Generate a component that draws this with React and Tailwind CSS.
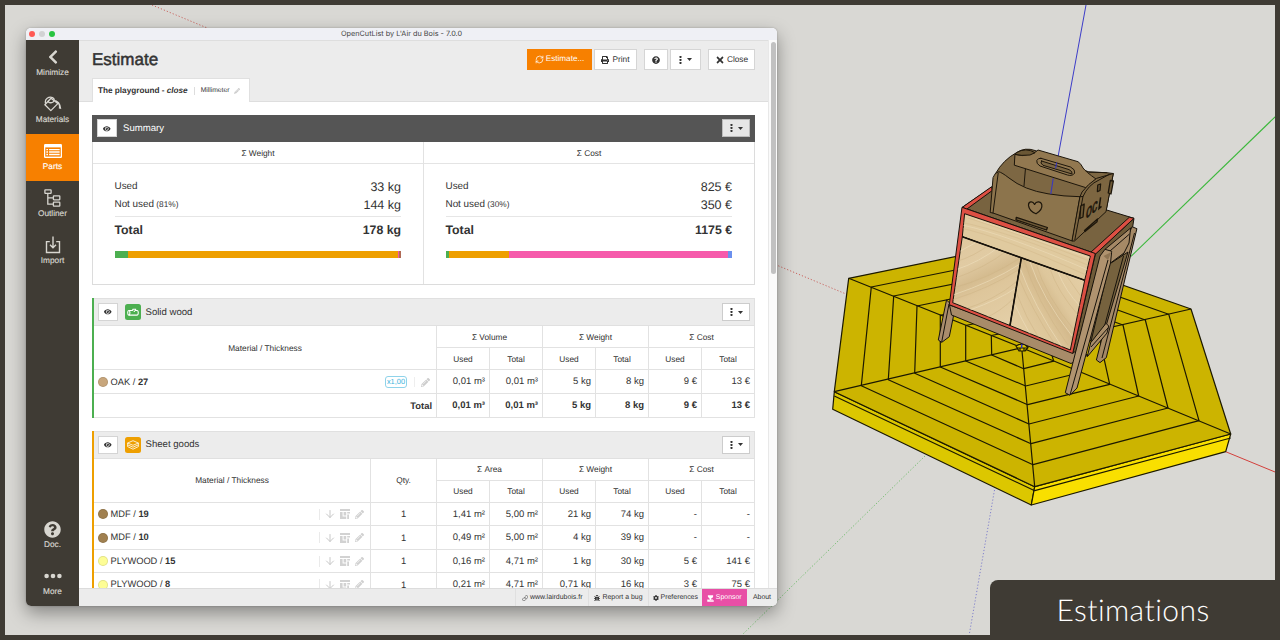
import React from "react";
import {
  FaChevronLeft, FaEye, FaPrint, FaQuestionCircle, FaTimes,
  FaPencilAlt, FaBug, FaCog,
} from "react-icons/fa";
import { LuArrowDown, LuRefreshCw, LuLink } from "react-icons/lu";

/* ---------- small icons ---------- */
const Bucket = () => (
  <svg width="18" height="16" viewBox="0 0 18 16" fill="none" stroke="currentColor" strokeWidth="1.3">
    <path d="M7 2.2 L13.8 7.6 L6.8 14.6 L0.9 8.8 Z" strokeLinejoin="round" />
    <path d="M1.6 7.6 C0.2 2.8 5 0.2 8.6 1.6 C11.2 2.8 10.4 6 7.8 6.6 C5 7.2 3.6 5.6 4.6 4.6" />
    <path d="M9.5 3.8 Q16.6 4.4 17.3 13 L14.8 12.4 Q15.4 8.6 13.4 7.2 Z" fill="currentColor" stroke="none" />
  </svg>
);
const Parts = () => (
  <svg width="18" height="14" viewBox="0 0 17 14" preserveAspectRatio="none">
    <rect width="17" height="14" rx="1.2" fill="#fff" />
    <rect x="1.2" y="3.4" width="14.6" height="9.2" fill="#f78000" />
    <g fill="#fff">
      <path d="M2.2 4.9h1.6v1.4h-1.6zM4.8 4.9h10v1.4h-10zM2.2 7.3h1.6v1.4h-1.6zM4.8 7.3h10v1.4h-10zM2.2 9.8h1.6v1.4h-1.6zM4.8 9.8h10v1.4h-10z" />
    </g>
  </svg>
);
const Outliner = () => (
  <svg width="17" height="18" viewBox="0 0 17 18" fill="none" stroke="currentColor" strokeWidth="1.3">
    <rect x="0.9" y="0.8" width="6.2" height="3.6" rx=".5" />
    <rect x="9.4" y="6.8" width="6.4" height="4" rx=".5" />
    <rect x="9.4" y="13.2" width="6.4" height="4" rx=".5" />
    <path d="M3.8 4.5V15.2H9.4M3.8 8.8H9.4" />
  </svg>
);
const Import = () => (
  <svg width="16" height="18" viewBox="0 0 16 18" fill="none" stroke="currentColor" strokeWidth="1.4">
    <path d="M4.8 5.6H1.5V16.5H14.5V5.6H11.2" />
    <path d="M8 0.6V11.6M5 8.8L8 11.8L11 8.8" />
  </svg>
);
const Dots = () => (
  <svg width="18" height="6" viewBox="0 0 18 6" fill="currentColor">
    <circle cx="2.6" cy="3" r="2.3" /><circle cx="9" cy="3" r="2.3" /><circle cx="15.4" cy="3" r="2.3" />
  </svg>
);
const VDots = () => (
  <svg width="3" height="8" viewBox="0 0 3 8" fill="#333">
    <rect x=".5" y="0" width="2" height="2" rx=".4" /><rect x=".5" y="3" width="2" height="2" rx=".4" /><rect x=".5" y="6" width="2" height="2" rx=".4" />
  </svg>
);
const Caret = () => (
  <svg width="5" height="3" viewBox="0 0 5 3" fill="#333"><path d="M0 0H5L2.5 3Z" /></svg>
);
const Log = () => (
  <svg width="12" height="8" viewBox="0 0 12 8" fill="none" stroke="#fff" strokeWidth="1.1">
    <ellipse cx="1.8" cy="4.8" rx="1.1" ry="2.3" />
    <path d="M1.8 2.5H5.4L6 1.2H8.6V2.5H10.2Q11.3 2.7 11.3 4.8T10.2 7.1H1.8M7.3 2.5V4" />
  </svg>
);
const Sheets = () => (
  <svg width="12" height="10" viewBox="0 0 12 10" fill="none" stroke="#fff" strokeWidth=".8" strokeLinejoin="round">
    <path d="M.6 3L6 .7L11.4 3L6 5.3ZM.6 3V4.8L6 7.2L11.4 4.8V3M.6 4.9V6.6L6 9.2L11.4 6.6V4.9" />
  </svg>
);
const CutPlan = () => (
  <svg width="10" height="10" viewBox="0 0 10 10" fill="#d2d2d2">
    <path d="M0 0H10V2H0ZM0 3H2.6V7.6H6.2V10H0ZM3.6 3H6.2V6.6H3.6ZM7.2 3H10V4.6H7.2ZM7.2 5.4H9V10H7.2Z" />
  </svg>
);
const Sponsor = () => (
  <svg width="7" height="7" viewBox="0 0 8 8" fill="#fff">
    <path d="M1 .3H7V1.8Q6.8 3.4 5 3.8L4.6 5H6.8V5.8L4 5.6L2.2 4.8L3 3.8Q1.2 3.2 1 1.8ZM.3 5H1.6L3.2 6H7.7V7.6H.3Z" />
  </svg>
);

/* ---------- sidebar ---------- */
const NavItem = ({ icon, label, active }) => (
  <div className={active ? "flex h-[47px] flex-col items-center bg-[#f78000] text-white" : "flex h-[47px] flex-col items-center text-[#d8d6d0]"}>
    <div className="mt-[7px] flex h-[20px] items-center">{icon}</div>
    <div className="mt-px text-[8.25px] leading-[10px] [-webkit-text-stroke:0.15px_currentColor]">{label}</div>
  </div>
);

/* ---------- buttons ---------- */
const Btn = ({ className = "", children }) => (
  <div className={"flex shrink-0 items-center justify-center border border-[#d5d5d5] bg-white text-[8.3px] text-[#333] " + className}>{children}</div>
);
const MenuBtn = ({ className = "bg-white border-[#ccc]" }) => (
  <div className={"flex h-[18px] w-[28px] items-center justify-center gap-[5px] border " + className}>
    <VDots /><Caret />
  </div>
);
const EyeBtn = ({ className = "" }) => (
  <div className={"flex h-[18px] w-[20px] items-center justify-center border border-[#d4d4d4] bg-white " + className}>
    <FaEye size={7.5} color="#333" />
  </div>
);

/* ---------- summary ---------- */
const Line = ({ label, note, value }) => (
  <div className="flex h-[18px] items-center justify-between">
    <span className="pt-[1.5px] text-[9.9px]">{label}{note && <span className="text-[8.3px]"> {note}</span>}</span>
    <span className="text-[12.5px]">{value}</span>
  </div>
);
const SummaryCol = ({ title, used, note, unused, total, bar, className }) => (
  <div className={"flex flex-col " + className}>
    <div className="flex h-[22px] items-center justify-center border-b border-[#e4e4e4] pt-[2px] text-[8.3px]">{title}</div>
    <div className="flex flex-col pl-[21.5px] pr-[22px] pt-[14px]">
      <Line label="Used" value={used} />
      <Line label="Not used" note={note} value={unused} />
      <div className="mt-[2px] h-px bg-[#e6e6e6]" />
      <div className="mt-[4px] flex h-[18px] items-center justify-between text-[12.3px] font-bold">
        <span>Total</span><span>{total}</span>
      </div>
      <div className="mt-[12px] flex h-[6.5px]">{bar}</div>
    </div>
  </div>
);

/* ---------- tables ---------- */
const cell = "flex items-center border-b border-r border-[#e2e2e2] pt-px";
const rowCell = "flex items-center border-b border-r border-[#e2e2e2] pt-[2px]";
const HeadCols = ({ first }) => (
  <div className="grid grid-cols-6 text-[8.3px]">
    {[first, "Σ Weight", "Σ Cost"].map((t) => (
      <div key={t} className={cell + " col-span-2 h-[22px] justify-center"}>{t}</div>
    ))}
    {["Used", "Total", "Used", "Total", "Used", "Total"].map((t, i) => (
      <div key={i} className={cell + " h-[22px] justify-center"}>{t}</div>
    ))}
  </div>
);
const Values = ({ v, className }) => (
  <div className={"grid grid-cols-6 text-[9.5px] " + className}>
    {v.map((t, i) => <div key={i} className={rowCell + " justify-end whitespace-nowrap pr-[4px]"}>{t}</div>)}
  </div>
);
const GroupHead = ({ icon, name }) => (
  <div className="flex h-[28px] items-center border-y border-r border-[#e0e0e0] bg-[#ececec] pl-[4px] pr-[4px]">
    <EyeBtn />
    <div className="ml-[7px] flex h-[16px] w-[16px] items-center justify-center rounded-[2.5px]">{icon}</div>
    <div className="ml-[4.5px] flex-1 pt-[2px] text-[9.6px]">{name}</div>
    <MenuBtn />
  </div>
);
const Name = ({ dot, name, t }) => (
  <>
    <span className={"mr-[2.5px] h-[10px] w-[10px] rounded-full border border-black/10 " + dot} />
    <span className="flex-1 pt-px text-[9.3px]">{name} / <b>{t}</b></span>
  </>
);
const sheetRows = [
  { dot: "bg-[#a08050]", name: "MDF", t: 19, v: ["1,41 m²", "5,00 m²", "21 kg", "74 kg", "-", "-"] },
  { dot: "bg-[#a08050]", name: "MDF", t: 10, v: ["0,49 m²", "5,00 m²", "4 kg", "39 kg", "-", "-"] },
  { dot: "bg-[#fdfd96]", name: "PLYWOOD", t: 15, v: ["0,16 m²", "4,71 m²", "1 kg", "30 kg", "5 €", "141 €"] },
  { dot: "bg-[#fdfd96]", name: "PLYWOOD", t: 8, v: ["0,21 m²", "4,71 m²", "0,71 kg", "16 kg", "3 €", "75 €"] },
];

/* ---------- 3D scene ---------- */
const O = [1021.7, 347.7];
const B = [1009.7, 245.5];
const lerpB = (t) => [O[0] + (B[0] - O[0]) * t, O[1] + (B[1] - O[1]) * t];
const spA = [[848.7, 278.3], [871.3, 287], [893.7, 296], [917, 306], [940.3, 315.3], [965.7, 325.5], [991.3, 335.5]];
const spB = [1, 0.87, 0.74, 0.605, 0.47, 0.325, 0.175].map(lerpB);
const spC = [[1191, 309], [1168.7, 314.2], [1145.3, 320], [1123, 325], [1098, 331], [1073, 337], [1048, 342]];
const spD = [[1230.7, 434], [1199, 420.7], [1168, 408], [1138.7, 396], [1109.7, 384.3], [1081, 372.5], [1053.7, 361.2]];
const spE = [[1034.7, 486.7], [1033, 464.7], [1031, 443.7], [1029, 424], [1027.7, 404.7], [1025.7, 386], [1023.7, 368.7]];
const spF = [[834.3, 391.7], [861.3, 385.7], [888.3, 379.7], [914.7, 373.3], [940.3, 367], [965.7, 361], [991.7, 355]];
const spokes = [spA, spB, spC, spD, spE, spF];
const pts = (a) => a.map((p) => p.join(",")).join(" ");

const Scene = () => (
  <svg className="absolute inset-0" width="1280" height="640" viewBox="0 0 1280 640">
    <defs>
      <linearGradient id="wl" gradientUnits="userSpaceOnUse" x1="965" y1="240" x2="1003" y2="322">
        <stop offset="0" stopColor="#dfc89f" /><stop offset=".25" stopColor="#e1cba3" /><stop offset=".45" stopColor="#d5bc90" /><stop offset=".6" stopColor="#dec69b" /><stop offset="1" stopColor="#e3cea6" />
      </linearGradient>
      <linearGradient id="wr" gradientUnits="userSpaceOnUse" x1="1015" y1="320" x2="1080" y2="280">
        <stop offset="0" stopColor="#e2cca2" /><stop offset=".35" stopColor="#dcc498" /><stop offset=".5" stopColor="#d4ba8d" /><stop offset=".65" stopColor="#dec79c" /><stop offset="1" stopColor="#e3cda4" />
      </linearGradient>
      <clipPath id="dl"><polygon points="962.3,236.7 1021.3,258 1010,325.5 952.7,302.7" /></clipPath>
      <clipPath id="dr"><polygon points="1021.3,258 1084.7,280.3 1070.3,350 1010,325.5" /></clipPath>
      <clipPath id="dt"><polygon points="964.6,213.7 1090.3,256 1084.7,280.3 962.3,236.7" /></clipPath>
    </defs>
    {/* axes */}
    <g fill="none" strokeWidth="1">
      <path d="M152 5L846 294" stroke="#c96560" strokeDasharray="1.2 2" />
      <path d="M1225.7 451.7L1276 472.4" stroke="#d3403c" />
      <path d="M1276 116L1131 256.3" stroke="#3cb83c" strokeWidth="1.1" />
      <path d="M925 456L741 636" stroke="#6fbc6b" strokeDasharray="1.2 2" />
      <path d="M994.5 490L969 636" stroke="#8080cc" strokeDasharray="1.2 2" />
      <path d="M1086 5L1058 157" stroke="#3c3cc8" />
    </g>
    {/* platform */}
    <g stroke="#1b1800" strokeWidth="1.2" strokeLinejoin="round">
      <polygon points="834.3,391.7 1034.7,486.7 1031.3,505 832.7,409.3" fill="#dcc700" />
      <polygon points="1034.7,486.7 1230.7,434 1225.7,451.7 1031.3,505" fill="#f9df00" />
      {spA.map((_, i) => <polygon key={i} points={pts(spokes.map((s) => s[i]))} fill="#ccb400" />)}
      <path fill="none" d="M834.3 396L1034.7 490.7L1230.7 438" />
      <path fill="none" d={spokes.map((s) => `M${O[0]} ${O[1]}L${s[0][0]} ${s[0][1]}`).join("")} />
      <polygon points="1016,346 1019,344.5 1025,344.5 1028,347.5 1025,351 1019,351" fill="#d8c000" />
      <path d="M1017 348H1027M1020 348V351M1024 348V351" fill="none" />
    </g>
    <path d="M1022.3 342L1021.5 348" stroke="#2a2ad0" strokeWidth="1.4" />
    {/* cabinet */}
    <g stroke="#17120b" strokeWidth="1" strokeLinejoin="round">
      <polygon points="946.5,300 938.3,340 941.7,342.4 949.3,336.7 953.3,317 953,306" fill="#a98c6c" />
      <path d="M949 304L941.7 342" fill="none" />
      <polygon points="949.5,305 951.5,315 1071,363.5 1088,355 1074,350" fill="#a88b69" />
      <polygon points="1095.5,253.7 1134,218.3 1132.7,226.7 1105,330 1072.7,353.3" fill="#6f5b38" />
      <polygon points="1132,226.7 1136.9,228.7 1106.3,357.7 1100,362.6 1096.4,360 1128,236" fill="#a58966" />
      <path d="M1134.5 233L1102 358" fill="none" />
      <polygon points="1128,252 1109.5,264 1090.7,342.7 1106,326" fill="#76623e" />
      <path d="M1123.5 256L1104 328" fill="none" />
      <polygon points="1105,249.3 1130.6,228 1129,243 1124,253 1110.5,263" fill="#a58966" />
      <path d="M1110 251L1129.5 234" fill="none" />
      <polygon points="1090.7,342.7 1106,323.3 1108.7,326 1107,333 1087.3,356.7" fill="#a98d69" />
      <path d="M1091 347L1108 328" fill="none" />
      <polygon points="1100,256 1105,249.3 1111.7,251.3 1110.5,263 1077,388 1070,395.3 1065.3,392.7" fill="#b0936f" />
      <path d="M1108 260L1070 395" fill="none" />
      <polygon points="1103.5,256 1108,260 1111.5,252" fill="#8e7452" stroke="none" />
      <polygon points="962.3,207.3 992,187 1106.7,210 1134,218.3 1095.3,253.5" fill="#786340" />
      <polygon points="962.3,207.3 991.7,186.7 992.3,190.5 966.7,209.2" fill="#dd4f43" />
      <polygon points="1090.7,252.3 1129.3,217.3 1134,218.3 1095.6,254" fill="#dd4f43" />
      <polygon points="962,207.3 1095.3,253.5 1072.7,353.5 949.3,304.7" fill="#dd4f43" />
      <polygon points="964.6,213.7 1090.3,256 1084.7,280.3 962.3,236.7" fill="#e0ca9f" />
      <polygon points="962.3,236.7 1021.3,258 1010,325.5 952.7,302.7" fill="url(#wl)" />
      <polygon points="1021.3,258 1084.7,280.3 1070.3,350 1010,325.5" fill="url(#wr)" />
    </g>
    {/* wood grain */}
    <g fill="none" strokeWidth="1">
      <g clipPath="url(#dt)">
        <path d="M960 222Q1010 232 1090 266M960 228Q1000 236 1086 275M968 218Q1020 234 1092 262" stroke="#d3ba8c" opacity=".5" />
        <path d="M962 225Q1005 234 1088 270M975 219L1090 258" stroke="#ecdcb9" opacity=".6" />
      </g>
      <g clipPath="url(#dl)">
        <path d="M955 262Q975 256 990 244M953 279Q985 268 1008 250M953 288Q990 278 1020 258M952 300Q990 288 1018 270M962 310Q995 300 1016 282M985 318Q1000 312 1014 298" stroke="#cdb283" opacity=".45" />
        <path d="M955 270Q980 262 1000 246M953 295Q992 282 1020 264M970 310Q998 300 1016 288M955 254L975 243" stroke="#eedfbe" opacity=".6" />
      </g>
      <g clipPath="url(#dr)">
        <path d="M1016 292Q1026 318 1040 340M1018 276Q1032 310 1056 346M1024 260Q1036 300 1068 345M1036 264Q1046 296 1074 330M1050 269Q1058 292 1078 315M1066 275L1082 298" stroke="#cdb283" opacity=".45" />
        <path d="M1015 305Q1022 320 1030 334M1020 268Q1034 306 1062 347M1030 262Q1042 298 1072 336M1058 272Q1066 292 1080 306" stroke="#eedfbe" opacity=".6" />
      </g>
    </g>
    <path d="M962.3 236.7L1084.7 280.3M1021.3 258L1010 325.5" stroke="#17120b" strokeWidth="1.6" fill="none" />
    {/* crate */}
    <g stroke="#1d160b" strokeWidth="1" strokeLinejoin="round" strokeLinecap="round">
      <path d="M995.7 173.3Q1003 160 1016.7 152.5Q1025 147 1035 150.5L1089 172L1106.7 172.7L1113.3 173.5L1106 211L1080 220L998 200Z" fill="#7d6743" />
      <path d="M1025.5 168L1024 186" fill="none" />
      <path d="M1015.3 154.5Q1022 157 1030 154Q1035 153.5 1038 150L1078 161.7Q1081 163.5 1083 168Q1086 172 1096 179L1086 187.7L1014.7 165.3Z" fill="#927850" />
      <path d="M1016.7 152.5Q1026 147 1035 152.7L1030 155Q1021 156 1015.5 154.5Z" fill="#6a5735" />
      <path d="M1041 158.3L1070.5 167Q1075.5 169.5 1074.7 173Q1072.5 176.5 1067.5 175L1040 166Q1036 163.5 1036.8 160.5Q1038 157.8 1041 158.3Z" fill="#927850" />
      <path d="M1041.5 161L1069 169.6Q1073 171.5 1072 174L1043 165.3Q1039.5 163 1041.5 161Z" fill="#7d6743" />
      <path d="M995.7 173.3L998.7 171.7Q1002 172.5 1009 178Q1024 190 1048 193.8Q1064 196.5 1080 196.7L1072.3 241L993 213L990.2 212.5L993 178Z" fill="#8c744c" />
      <path d="M998.2 173L993 213" fill="none" />
      <path d="M1080 196.7L1082 192Q1088 184 1096.7 178.3L1113.3 173.5L1106 211.7L1074.5 241L1072.3 241Z" fill="#7d6641" />
      <path d="M1083 196.5L1074.8 240M1080 196.7L1083 196.5Q1088 185 1099 180L1109 174.5M1089 172L1106.7 172.7" fill="none" />
      <path d="M1016.3 217.3L1047.4 227.5L1046.5 230L1016 219.8ZM1084.5 230.5L1097.5 219L1097 221.8L1085 231.5ZM1097.8 185L1100.6 184L1100 190.5L1097.4 191.6ZM1110.3 180.5L1113.4 181L1111 194L1108.2 193ZM1080.8 206L1084.2 204L1083 217L1079.8 218.5Z" fill="#6e5936" strokeWidth="1.3" />
      <path d="M1034.6 204.4C1032.5 200.3 1028.3 201.4 1028.5 205.4C1029 210 1032.6 212.4 1036 213.8C1039.6 211.6 1042.6 208.6 1041.8 204.6C1040.6 201.2 1036.2 201 1034.6 204.4Z" fill="#927850" strokeWidth="1.2" />
    </g>
    <text transform="matrix(.56 -.46 -.12 1 1085.6 219)" fontFamily="Liberation Sans, sans-serif" fontSize="19" fill="#1d160b" stroke="#1d160b" strokeWidth=".8">oc</text>
    <path d="M1100.6 197.4L1099 208.6L1101.5 206.4" stroke="#1d160b" strokeWidth="1.5" fill="none" />
    <path d="M1056.6 162.5L1055.6 168.5M1053.2 178.5L1050.8 194" stroke="#3838c0" strokeWidth="1.1" />
  </svg>
);

export default function App() {
  return (
    <div className="relative h-[640px] w-[1280px] overflow-hidden bg-[#3f3b34] p-[5px] font-['Liberation_Sans',Arial,sans-serif] text-[#333] [text-rendering:geometricPrecision]">
      <div className="h-[630px] w-[1270px] bg-[#d9d8d4]" />
      <div className="absolute inset-0 [clip-path:inset(5px)]"><Scene /></div>

      <div className="absolute left-[26px] top-[28px] flex h-[578px] w-[751px] flex-col overflow-hidden rounded-[5px] bg-white shadow-[0_7px_18px_rgba(0,0,0,0.38),0_0_2px_rgba(0,0,0,0.25)]">
        <div className="relative flex h-[12px] shrink-0 items-center justify-center bg-[#eff0f5] font-['Inter',sans-serif] text-[7.3px] text-[#444]">
          <div className="absolute left-[3px] flex gap-[4px]">
            <span className="h-[6px] w-[6px] rounded-full bg-[#ff5a55]" />
            <span className="h-[6px] w-[6px] rounded-full bg-[#d2d2d4]" />
            <span className="h-[6px] w-[6px] rounded-full bg-[#28c440]" />
          </div>
          OpenCutList by L'Air du Bois - 7.0.0
        </div>

        <div className="flex h-[566px]">
          <nav className="flex w-[53px] shrink-0 flex-col justify-between bg-[#3f3b34]">
            <div>
              <NavItem icon={<FaChevronLeft size={16} />} label="Minimize" />
              <NavItem icon={<Bucket />} label="Materials" />
              <NavItem icon={<Parts />} label="Parts" active />
              <NavItem icon={<Outliner />} label="Outliner" />
              <NavItem icon={<Import />} label="Import" />
            </div>
            <div>
              <NavItem icon={<FaQuestionCircle size={17} />} label="Doc." />
              <NavItem icon={<Dots />} label="More" />
            </div>
          </nav>

          <div className="flex flex-1 flex-col">
            <div className="flex h-[548px]">
              <main className="flex w-[689px] flex-col overflow-hidden">
                <header className="h-[62px] shrink-0 border-b border-t border-[#dedede] bg-[#ececec] pl-[13px] pr-[13px]">
                  <div className="flex h-[37px] items-center">
                    <h1 className="flex-1 text-[17px] leading-none [-webkit-text-stroke:0.5px_#333]">Estimate</h1>
                    <Btn className="h-[21px] w-[65px] gap-[2px] border-[#f78000] bg-[#f78000]! text-white!"><LuRefreshCw size={9} /><span className="text-[8.15px]">Estimate...</span></Btn>
                    <Btn className="ml-[2px] h-[21px] w-[43px] gap-[3px]"><FaPrint size={8} />Print</Btn>
                    <Btn className="ml-[7px] h-[21px] w-[24px]"><FaQuestionCircle size={8} /></Btn>
                    <Btn className="ml-[2px] h-[21px] w-[31px] gap-[5px]"><VDots /><Caret /></Btn>
                    <Btn className="ml-[7px] h-[21px] w-[47px] gap-[2px]"><FaTimes size={10} />Close</Btn>
                  </div>
                  <div className="flex h-[24px] w-[158px] items-center border-x border-t border-[#e0e0e0] bg-white pl-[5px] pt-px shadow-[0_1px_0_#fff]">
                    <b className="whitespace-nowrap text-[8.2px]">The playground - <i>close</i></b>
                    <span className="ml-[6px] h-[8px] w-px bg-[#ddd]" />
                    <span className="ml-[6px] text-[6.75px]">Millimeter</span>
                    <FaPencilAlt size={6} color="#ccc" className="ml-[4px]" />
                  </div>
                </header>

                <div className="flex min-h-0 flex-1 flex-col pl-[13px] pr-[13px] pt-[12.5px]">
                  <section className="h-[170.5px] shrink-0 border border-[#dcdcdc]">
                    <div className="-mx-px -mt-px flex h-[27.5px] items-center bg-[#555] pl-[5px] pr-[5px] text-white">
                      <EyeBtn />
                      <div className="ml-[6px] flex-1 pt-[2px] text-[9.6px]">Summary</div>
                      <MenuBtn className="border-[#bbb] bg-[#e6e6e6]" />
                    </div>
                    <div className="flex h-[142px]">
                      <SummaryCol className="w-[331px] border-r border-[#e2e2e2]" title="Σ Weight" used="33 kg" note="(81%)" unused="144 kg" total="178 kg"
                        bar={<><i className="w-[13px] bg-[#4caf50]" /><i className="flex-1 bg-[#ee9f00]" /><i className="w-[1px] bg-[#f457a6]" /><i className="w-[2px] bg-[#b06a55]" /></>} />
                      <SummaryCol className="flex-1" title="Σ Cost" used="825 €" note="(30%)" unused="350 €" total="1175 €"
                        bar={<><i className="w-[3px] bg-[#4caf50]" /><i className="w-[60px] bg-[#ee9f00]" /><i className="flex-1 bg-[#f65aab]" /><i className="w-[4px] bg-[#6b90ee]" /></>} />
                    </div>
                  </section>

                  <section className="mt-[13px] shrink-0 border-l-2 border-[#4caf50]">
                    <GroupHead name="Solid wood" icon={<div className="flex h-full w-full items-center justify-center rounded-[2.5px] bg-[#4caf50]"><Log /></div>} />
                    <div className="grid grid-cols-[343px_318px]">
                      <div className={cell + " justify-center text-[8.3px]"}>Material / Thickness</div>
                      <HeadCols first="Σ Volume" />
                      <div className={cell + " h-[24px] pl-[4px] pr-[6px]"}>
                        <Name dot="bg-[#c8a67c]" name="OAK" t={27} />
                        <span className="rounded-[3px] border border-[#8fd3ea] px-[1px] text-[7.4px] leading-[10px] text-[#3fb4dc]">x1,00</span>
                        <span className="ml-[7px] h-[10px] w-px bg-[#eee]" />
                        <FaPencilAlt size={9} color="#ccc" className="ml-[6px]" />
                      </div>
                      <Values className="h-[24px]" v={["0,01 m³", "0,01 m³", "5 kg", "8 kg", "9 €", "13 €"]} />
                      <div className={rowCell + " h-[23.5px] justify-end pr-[4px] text-[9.4px] font-bold"}>Total</div>
                      <Values className="h-[23.5px] font-bold" v={["0,01 m³", "0,01 m³", "5 kg", "8 kg", "9 €", "13 €"]} />
                    </div>
                  </section>

                  <section className="mt-[13px] shrink-0 border-l-2 border-[#ee9f00]">
                    <GroupHead name="Sheet goods" icon={<div className="flex h-full w-full items-center justify-center rounded-[2.5px] bg-[#ee9f00]"><Sheets /></div>} />
                    <div className="grid grid-cols-[277px_66px_318px]">
                      <div className={cell + " justify-center text-[8.3px]"}>Material / Thickness</div>
                      <div className={cell + " justify-center text-[8.3px]"}>Qty.</div>
                      <HeadCols first="Σ Area" />
                      {sheetRows.map((r) => (
                        <React.Fragment key={r.name + r.t}>
                          <div className={cell + " h-[23.5px] pl-[4px] pr-[6px]"}>
                            <Name dot={r.dot} name={r.name} t={r.t} />
                            <span className="h-[11px] w-px bg-[#eaeaea]" />
                            <LuArrowDown size={12} color="#c8c8c8" className="ml-[4px]" />
                            <span className="ml-[4px]"><CutPlan /></span>
                            <FaPencilAlt size={9} color="#d0d0d0" className="ml-[5px]" />
                          </div>
                          <div className={cell + " justify-center text-[9.4px]"}>1</div>
                          <Values className="h-[23.5px]" v={r.v} />
                        </React.Fragment>
                      ))}
                    </div>
                  </section>
                </div>
              </main>
              <div className="w-[9px] border-l border-[#e8e8e8] bg-[#fafafa] pl-[1.5px] pt-[2px]">
                <div className="h-[232px] w-[5px] rounded-full bg-[#c1c1c1]" />
              </div>
            </div>

            <footer className="flex h-[18px] justify-end border-t border-[#dcdcdc] bg-[#ececec] text-[6.95px]">
              <div className="flex w-[73px] items-center justify-center gap-[2px] border-l border-[#e0e0e0] pt-px"><LuLink size={6.5} />www.lairdubois.fr</div>
              <div className="flex w-[60px] items-center justify-center gap-[2px] border-l border-[#e0e0e0] pt-px"><FaBug size={6} />Report a bug</div>
              <div className="flex w-[54px] items-center justify-center gap-[1.5px] border-l border-[#e0e0e0] pt-px"><FaCog size={6} />Preferences</div>
              <div className="flex w-[45px] items-center justify-center gap-[1.5px] bg-[#e84fa6] pt-px text-white"><Sponsor />Sponsor</div>
              <div className="flex w-[30px] items-center justify-center pt-px">About</div>
            </footer>
          </div>
        </div>
      </div>

      <div className="absolute bottom-0 right-0 flex h-[60px] w-[290px] items-center justify-center rounded-tl-[8px] bg-[#3f3b34] pr-[4px] font-['Lato','Open_Sans',sans-serif] text-[30px] font-light tracking-[0.45px] text-white [font-variant-ligatures:none]">
        Estimations
      </div>
    </div>
  );
}
